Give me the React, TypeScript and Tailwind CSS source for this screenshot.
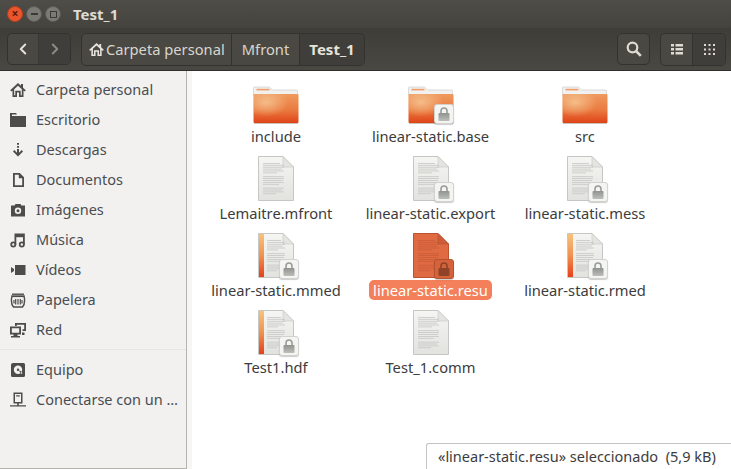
import React from 'react';
import { ChevronLeft, ChevronRight } from 'lucide-react';

const font = { fontFamily: '"Noto Sans", sans-serif' };

const HomeIcon = ({ className }: { className?: string }) => (
  <svg viewBox="0 0 16 16" className={className} fill="currentColor">
    <path fillRule="evenodd" d="M8 1 0.200 8.300 1.400 9.500 2.500 8.500V15H7V10.500H9V15H13.500V8.500L14.600 9.500 15.800 8.300 13 5.700V2H11V3.800L8 1ZM8 3.700 11.800 7.200V13.300H10.700V8.800H5.300V13.300H4.200V7.200L8 3.700Z" />
  </svg>
);

const sidebarIcons: Record<string, React.ReactNode> = {
  home: <HomeIcon className="w-4 h-4" />,
  folder: (
    <svg viewBox="0 0 16 16" className="w-4 h-4" fill="currentColor">
      <path d="M0 1h6l1 1.500h-5V4h14v11H0V1Z" />
    </svg>
  ),
  download: (
    <svg viewBox="0 0 16 16" className="w-4 h-4" fill="currentColor">
      <path d="M7 1h2v1.800H7ZM7 4h2v1.800H7ZM7 7h2v3.800l2.700-2.700 1.300 1.300L8 14.500 3 9.400l1.300-1.300L7 10.800V7Z" />
    </svg>
  ),
  doc: (
    <svg viewBox="0 0 16 16" className="w-4 h-4" fill="currentColor">
      <path fillRule="evenodd" d="M3 1h6.800L14 5.200V15H3V1Zm1.800 1.800v10.400h7.400V6.300H8.800V2.800H4.800Z" />
    </svg>
  ),
  camera: (
    <svg viewBox="0 0 16 16" className="w-4 h-4" fill="currentColor">
      <path fillRule="evenodd" d="M5.500 2h5l1 1.500H15v11H1v-11h3.500l1-1.500ZM8 5.500a3.200 3.200 0 1 0 0 6.400 3.200 3.200 0 0 0 0-6.400Zm0 1.700a1.500 1.500 0 1 1 0 3 1.500 1.500 0 0 1 0-3Z" />
    </svg>
  ),
  music: (
    <svg viewBox="0 0 16 16" className="w-4 h-4" fill="none" stroke="currentColor" strokeWidth="1.800">
      <circle cx="3.300" cy="12.500" r="2.100" />
      <circle cx="11.800" cy="12.500" r="2.100" />
      <path d="M5.400 12.500V2.500h8.500v10" />
      <path d="M5.400 4h8.500" strokeWidth="2.400" />
    </svg>
  ),
  video: (
    <svg viewBox="0 0 16 16" className="w-4 h-4" fill="currentColor">
      <path d="M5 3h10.500v10H5ZM1 5l3 2v2l-3 2Z" />
    </svg>
  ),
  trash: (
    <svg viewBox="0 0 16 16" className="w-4 h-4" fill="none" stroke="currentColor" strokeWidth="1.200">
      <path d="M2 2.200h12" strokeWidth="1.400" />
      <path d="M1.200 4.200h13.600" strokeWidth="1.800" />
      <path d="M1.800 5c-.8 4 -.4 7.500 1.700 10h9c2.100-2.500 2.500-6 1.700-10" strokeWidth="1.400" />
      <path d="M8 7v5.500M5.700 7v5.500M10.300 7v5.500M4 8v3.500M12 8v3.500" />
    </svg>
  ),
  network: (
    <svg viewBox="0 0 16 16" className="w-4 h-4" fill="currentColor">
      <path fillRule="evenodd" d="M5 1h11v8h-3.500V7.200h1.700V2.800H6.800V4H5V1Z" />
      <path fillRule="evenodd" d="M0 4.500h11v8H7.500V14H10v1.500H1V14h2.500v-1.500H0v-8Zm1.800 1.700v4.600h7.400V6.200H1.800Z" />
      <path d="M12 10.500h2.500V13H12Z" />
    </svg>
  ),
  disk: (
    <svg viewBox="0 0 16 16" className="w-4 h-4" fill="currentColor">
      <path fillRule="evenodd" d="M3 1h10.500A1.500 1.500 0 0 1 15 2.500v11a1.500 1.500 0 0 1-1.500 1.500H2.500A1.500 1.500 0 0 1 1 13.500V3a2 2 0 0 1 2-2Zm5 2.500a4.200 4.200 0 1 0 0 8.400 4.200 4.200 0 0 0 0-8.400ZM8 6.500a1.200 1.200 0 1 1 0 2.400 1.200 1.200 0 0 1 0-2.400Zm1 2.500 2.500 3 1-1L10 8.500Z" />
    </svg>
  ),
  server: (
    <svg viewBox="0 0 16 16" className="w-4 h-4" fill="currentColor">
      <path fillRule="evenodd" d="M3.500 0.500h9v11h-9V0.500ZM5 2v8h6V2H5Zm1.200 1.200h3.600v1.200H6.200ZM7.200 11.500h1.600V13.200H16v1.300H0V13.200h7.200Z" />
    </svg>
  ),
};

const Badge = ({ selected, inset }: { selected?: boolean; inset?: boolean }) => (
  <div
    className={`absolute w-[20px] h-[20px] rounded-[3px] flex items-center justify-center border shadow-[0_1px_1px_rgba(0,0,0,0.2)] ${
      inset ? 'right-0 bottom-0' : 'right-[-5px] bottom-[-1px]'
    } ${selected ? 'bg-[#d4633c] border-[#b4522f]' : 'bg-[#f4f4f2] border-[#d2d2ce]'}`}
  >
    <svg viewBox="0 0 12 14" className="w-[12px] h-[14px]">
      <defs>
        <linearGradient id="lockGrey" x1="0" y1="0" x2="0" y2="1">
          <stop offset="0" stopColor="#8f928d" />
          <stop offset="1" stopColor="#bcbeb9" />
        </linearGradient>
      </defs>
      <path d="M3 6.500V4a3 3 0 0 1 6 0v2.500" fill="none" stroke={selected ? '#8f4227' : '#9a9c98'} strokeWidth="1.600" />
      <rect x="0.500" y="6" width="11" height="8" rx="1" fill={selected ? '#8f4227' : 'url(#lockGrey)'} />
    </svg>
  </div>
);

const Folder = ({ locked }: { locked?: boolean }) => (
  <div className="relative w-[46px] h-[38px]">
    <svg viewBox="0 0 46 38" className="w-[46px] h-[38px]">
      <defs>
        <linearGradient id="folderBody" x1="0" y1="0" x2="0" y2="1">
          <stop offset="0" stopColor="#ef9a5f" />
          <stop offset="0.55" stopColor="#ea7a40" />
          <stop offset="1" stopColor="#df4318" />
        </linearGradient>
        <radialGradient id="folderGlow" cx="0.28" cy="0.28" r="0.5">
          <stop offset="0" stopColor="#f6c593" stopOpacity="0.85" />
          <stop offset="1" stopColor="#f6c593" stopOpacity="0" />
        </radialGradient>
      </defs>
      <path d="M0.500 9V2a1 1 0 0 1 1-1h15l3 3h24a1 1 0 0 1 1 1v4Z" fill="#f1f1ef" stroke="#c8c8c4" strokeWidth="0.600" />
      <rect x="3.500" y="2.800" width="13" height="1.600" fill="#f39c6b" />
      <rect x="0.500" y="8" width="45" height="29" rx="1" fill="url(#folderBody)" />
      <rect x="0.500" y="8" width="45" height="29" rx="1" fill="url(#folderGlow)" />
      <rect x="1" y="37" width="44" height="1" fill="#c9c2bb" />
    </svg>
    {locked && <Badge inset />}
  </div>
);

const lineWidths = [17, 21, 21, 19, 21, 14, 0, 21, 21, 20, 21, 16, 0, 21, 19, 21, 13];

const Doc = ({ locked, accent, selected }: { locked?: boolean; accent?: boolean; selected?: boolean }) => {
  const edge = selected ? '#bb5230' : '#c6c6c2';
  const line = selected ? '#b4533288' : '#c6c6c3';
  return (
    <div className="relative w-[36px] h-[45px]">
      <svg viewBox="0 0 36 45" className="w-[36px] h-[45px]">
        <defs>
          <linearGradient id="docSheet" x1="0" y1="0" x2="0" y2="1">
            <stop offset="0" stopColor="#f5f5f3" />
            <stop offset="1" stopColor="#e2e2df" />
          </linearGradient>
          <linearGradient id="docAccent" x1="0" y1="0" x2="0" y2="1">
            <stop offset="0" stopColor="#f6c27c" />
            <stop offset="0.5" stopColor="#f0924f" />
            <stop offset="1" stopColor="#e5401a" />
          </linearGradient>
        </defs>
        <path d="M0.500 0.500H25L35.500 11V44.500H0.500Z" fill={selected ? '#e06a42' : 'url(#docSheet)'} stroke={edge} />
        {accent && <rect x="1" y="1" width="5" height="43" fill="url(#docAccent)" />}
        <path d="M25 0.500V11H35.500Z" fill={selected ? '#cc5d38' : '#e4e4e1'} stroke={edge} strokeWidth="0.600" />
        {lineWidths.map((w, i) =>
          w ? <rect key={i} x={accent ? 9 : 5} y={7 + i * 1.9} width={accent ? w - 3 : w} height="0.800" fill={line} /> : null
        )}
      </svg>
      {locked && <Badge selected={selected} />}
    </div>
  );
};

type FileItem = { name: string; kind: 'folder' | 'doc' | 'media'; locked?: boolean; selected?: boolean };

const files: FileItem[] = [
  { name: 'include', kind: 'folder' },
  { name: 'linear-static.base', kind: 'folder', locked: true },
  { name: 'src', kind: 'folder' },
  { name: 'Lemaitre.mfront', kind: 'doc' },
  { name: 'linear-static.export', kind: 'doc', locked: true },
  { name: 'linear-static.mess', kind: 'doc', locked: true },
  { name: 'linear-static.mmed', kind: 'media', locked: true },
  { name: 'linear-static.resu', kind: 'doc', locked: true, selected: true },
  { name: 'linear-static.rmed', kind: 'media', locked: true },
  { name: 'Test1.hdf', kind: 'media', locked: true },
  { name: 'Test_1.comm', kind: 'doc' },
];

const places = [
  ['home', 'Carpeta personal'],
  ['folder', 'Escritorio'],
  ['download', 'Descargas'],
  ['doc', 'Documentos'],
  ['camera', 'Imágenes'],
  ['music', 'Música'],
  ['video', 'Vídeos'],
  ['trash', 'Papelera'],
  ['network', 'Red'],
];

const SidebarRow = ({ icon, label }: { icon: string; label: string }) => (
  <div className="h-[30px] flex items-center pl-[10px] pr-[6px] gap-[10px] text-[#4a4d52]">
    <span className="text-[#4c4c4c] shrink-0">{sidebarIcons[icon]}</span>
    <span className="whitespace-nowrap">{label}</span>
  </div>
);

export default function App() {
  return (
    <div className="w-[731px] h-[469px] overflow-hidden flex flex-col relative bg-white text-[14.500px]" style={font}>
      {/* Title bar */}
      <div className="h-[28px] shrink-0 flex items-center pl-[7px] bg-gradient-to-b from-[#4f4d47] to-[#45433e] gap-[3px]">
        <div className="w-[16px] h-[16px] rounded-full bg-[#e9552c] border border-[#b8401f] flex items-center justify-center text-[#5a1a08] text-[12px] leading-none font-bold">×</div>
        <div className="w-[16px] h-[16px] rounded-full bg-[#7b7a74] border border-[#5c5b56] flex items-center justify-center">
          <div className="w-[7px] h-[1.500px] bg-[#3a3934]" />
        </div>
        <div className="w-[16px] h-[16px] rounded-full bg-[#7b7a74] border border-[#5c5b56] flex items-center justify-center">
          <div className="w-[7px] h-[7px] border border-[#3a3934]" />
        </div>
        <span className="ml-[9px] text-[#dfdbd2] font-bold text-[15px]">Test_1</span>
      </div>

      {/* Toolbar */}
      <div className="h-[43px] shrink-0 flex items-center px-[5px] pl-[7px] bg-gradient-to-b from-[#3f3d38] to-[#4a4843] border-b border-[#2f2e2a]">
        <div className="flex w-[64px] h-[32px] rounded-[5px] border border-[#33322e] bg-[#4a4843]">
          <div className="w-[31px] flex items-center justify-center border-r border-[#3a3935]">
            <ChevronLeft size={18} strokeWidth={2.500} className="text-[#e6e3dc]" />
          </div>
          <div className="flex-1 flex items-center justify-center bg-[#403e3a] rounded-r-[5px]">
            <ChevronRight size={18} strokeWidth={2.500} className="text-[#8d8b85]" />
          </div>
        </div>

        <div className="ml-[10px] flex h-[33px] rounded-[5px] border border-[#33322e] bg-[#4a4843] text-[#d9d6cd] text-[14.700px]">
          <div className="w-[150px] flex items-center pl-[7px] gap-[2px] border-r border-[#33322e]">
            <HomeIcon className="w-[15px] h-[15px] text-[#e6e3dc] shrink-0" />
            <span className="whitespace-nowrap">Carpeta personal</span>
          </div>
          <div className="w-[68px] flex items-center justify-center border-r border-[#33322e]">Mfront</div>
          <div className="w-[64px] flex items-center justify-center font-bold text-[15px] bg-[#403e3a] text-[#e6e3dc] rounded-r-[5px]">Test_1</div>
        </div>

        <div className="ml-auto w-[33px] h-[32px] rounded-[5px] border border-[#33322e] bg-[#4a4843] flex items-center justify-center">
          <svg viewBox="0 0 16 16" className="w-4 h-4" fill="none" stroke="#dedbd3">
            <circle cx="6.500" cy="6.500" r="4.800" strokeWidth="2.200" />
            <path d="M10 10l4.800 4.800" strokeWidth="2.600" />
          </svg>
        </div>

        <div className="ml-[10px] flex w-[66px] h-[33px] rounded-[5px] border border-[#33322e] bg-[#4a4843]">
          <div className="w-[32px] flex items-center justify-center border-r border-[#33322e]">
            <svg viewBox="0 0 12 11" className="w-[12px] h-[11px]" fill="#dedbd3">
              <path d="M0 0h3v2.500H0ZM4.500 0H12v2.500H4.500ZM0 4h3v2.500H0ZM4.500 4H12v2.500H4.500ZM0 8h3v2.500H0ZM4.500 8H12v2.500H4.500Z" />
            </svg>
          </div>
          <div className="flex-1 flex items-center justify-center bg-[#403e3a] rounded-r-[5px]">
            <svg viewBox="0 0 11 11" className="w-[11px] h-[11px]" fill="#dedbd3">
              <path d="M0 0h2v2H0ZM4.500 0h2v2h-2ZM9 0h2v2H9ZM0 4.500h2v2H0ZM4.500 4.500h2v2h-2ZM9 4.500h2v2H9ZM0 9h2v2H0ZM4.500 9h2v2h-2ZM9 9h2v2H9Z" />
            </svg>
          </div>
        </div>
      </div>

      <div className="flex-1 flex min-h-0">
        {/* Sidebar */}
        <div className="w-[187px] shrink-0 bg-[#f2f1ef] border-r border-[#b5b3ae] border-b pt-[4px]">
          {places.map(([icon, label]) => (
            <SidebarRow key={label} icon={icon} label={label} />
          ))}
          <div className="h-px bg-[#e6e5e2] mt-[4px] mb-[5px]" />
          <SidebarRow icon="disk" label="Equipo" />
          <SidebarRow icon="server" label="Conectarse con un …" />
        </div>

        <div className="w-[5px] shrink-0 bg-[#f6f6f5]" />

        {/* Icon grid */}
        <div className="flex-1 pl-[7px] pt-[8px] grid grid-cols-[154px_155px_154px] auto-rows-[77px] content-start text-[#3c3c3c] text-[14.700px]">
          {files.map((f) => (
            <div key={f.name} className="flex flex-col items-center">
              <div className="h-[45px] flex items-end justify-center">
                {f.kind === 'folder' ? (
                  <Folder locked={f.locked} />
                ) : (
                  <Doc locked={f.locked} accent={f.kind === 'media'} selected={f.selected} />
                )}
              </div>
              <div
                className={`mt-[2px] h-[20px] px-[4px] leading-[20px] rounded-[5px] whitespace-nowrap ${
                  f.selected ? 'bg-[#f37f5b] text-white' : ''
                }`}
              >
                {f.name}
              </div>
            </div>
          ))}
        </div>
      </div>

      {/* Status overlay */}
      <div className="absolute right-0 bottom-0 w-[305px] h-[26px] bg-white border-t border-l border-[#c4c4c0] rounded-tl-[3px] pl-[11px] flex items-center text-[#3c3c3c] text-[14.500px] whitespace-nowrap">
        «linear-static.resu» seleccionado&nbsp;&nbsp;(5,9 kB)
      </div>
    </div>
  );
}
